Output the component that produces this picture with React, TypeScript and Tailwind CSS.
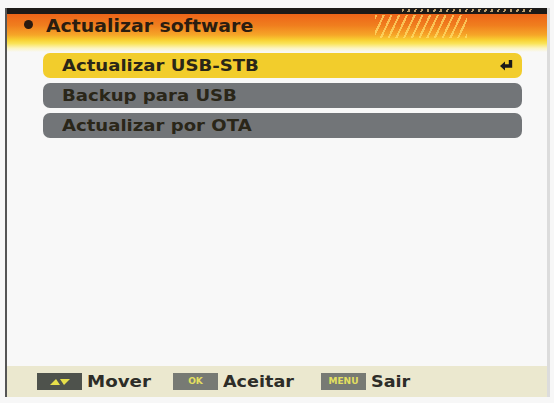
import React from "react";

const items = [
  { label: "Actualizar USB-STB", active: true },
  { label: "Backup para USB", active: false },
  { label: "Actualizar por OTA", active: false },
];

function EnterIcon() {
  return (
    <svg width="15" height="13" viewBox="0 0 15 13">
      <path d="M11.5 1 V7 H5" fill="none" stroke="#1a1a1a" strokeWidth="3.4" />
      <path d="M1 7 L6 2.5 V11.5 Z" fill="#1a1a1a" />
    </svg>
  );
}

function KeyBox({ children, light }: { children: React.ReactNode; light?: boolean }) {
  return (
    <div
      className={
        light
          ? "flex h-[17px] w-[45px] shrink-0 items-center justify-center bg-[#777a74] text-[9px] font-bold text-[#e4e060]"
          : "flex h-[17px] w-[45px] shrink-0 items-center justify-center bg-[#4e524c] text-[9px] font-bold text-[#e6e24a]"
      }
    >
      {children}
    </div>
  );
}

export default function App() {
  return (
    <div
      className="flex h-[403px] w-[554px] bg-[#f7f7f7] pt-[8px] pl-[5px] pr-[4px] pb-[6px]"
      style={{ fontFamily: '"DejaVu Sans", Verdana, sans-serif' }}
    >
      <div className="flex flex-1 flex-col border-l-[2px] border-r-[3px] border-l-[#555] border-r-[#dcdcdc] bg-[#f8f8f8]">
        {/* top bar */}
        <div className="relative h-[6px] bg-[#1c1a18]">
          <div className="absolute left-[395px] top-[1px] h-[3px] w-[130px] bg-[repeating-linear-gradient(110deg,#c0a070_0px,#c0a070_2px,transparent_2px,transparent_6px)]" />
        </div>
        {/* header */}
        <div className="relative flex h-[38px] items-start bg-[linear-gradient(180deg,#ec6418_0%,#f07e1e_30%,#f6a628_55%,#f8d032_68%,#fae45a_78%,#fcf4c0_90%,#f8f8f8_100%)]">
          <div className="absolute left-[368px] top-[1px] h-[23px] w-[92px] bg-[repeating-linear-gradient(115deg,rgba(255,225,110,0.7)_0px,rgba(255,225,110,0.7)_2px,transparent_2px,transparent_7px)]" />
          <div className="mt-[6px] ml-[17px] h-[9px] w-[9px] rounded-full bg-[#2a1a10]" />
          <div className="ml-[13px] inline-block origin-left scale-x-[1.02] text-[18.5px] font-bold leading-[23px] text-[#2b1d10]">
            Actualizar software
          </div>
        </div>
        {/* menu */}
        <div className="flex flex-1 flex-col gap-[5px] pt-[1px] pl-[36px] pr-[25px]">
          {items.map((it) => (
            <div
              key={it.label}
              className={
                it.active
                  ? "flex h-[25px] items-center justify-between rounded-[7px] bg-[#f2cd2c] pl-[19px] pr-[8px]"
                  : "flex h-[25px] items-center rounded-[7px] bg-[#727578] pl-[19px]"
              }
            >
              <span className="inline-block origin-left scale-x-[1.13] text-[16px] font-bold text-[#2a2618]">
                {it.label}
              </span>
              {it.active && <EnterIcon />}
            </div>
          ))}
        </div>
        {/* footer */}
        <div className="flex h-[31px] items-center bg-[#ebe8cf] pl-[30px]">
          <KeyBox>
            <svg width="22" height="8" viewBox="0 0 22 8">
              <path d="M1 7 L7 1 L11 7 Z" fill="#e6df4a" />
              <path d="M11 1 L21 1 L15 7 Z" fill="#e6df4a" />
            </svg>
          </KeyBox>
          <span className="ml-[5px] inline-block w-[86px] origin-left scale-x-[1.14] text-[16px] font-bold text-[#2d2d28]">
            Mover
          </span>
          <KeyBox light>OK</KeyBox>
          <span className="ml-[5px] inline-block w-[98px] origin-left scale-x-[1.1] text-[16px] font-bold text-[#2d2d28]">
            Aceitar
          </span>
          <KeyBox light>MENU</KeyBox>
          <span className="ml-[5px] inline-block origin-left scale-x-[1.1] text-[16px] font-bold text-[#2d2d28]">
            Sair
          </span>
        </div>
      </div>
    </div>
  );
}
